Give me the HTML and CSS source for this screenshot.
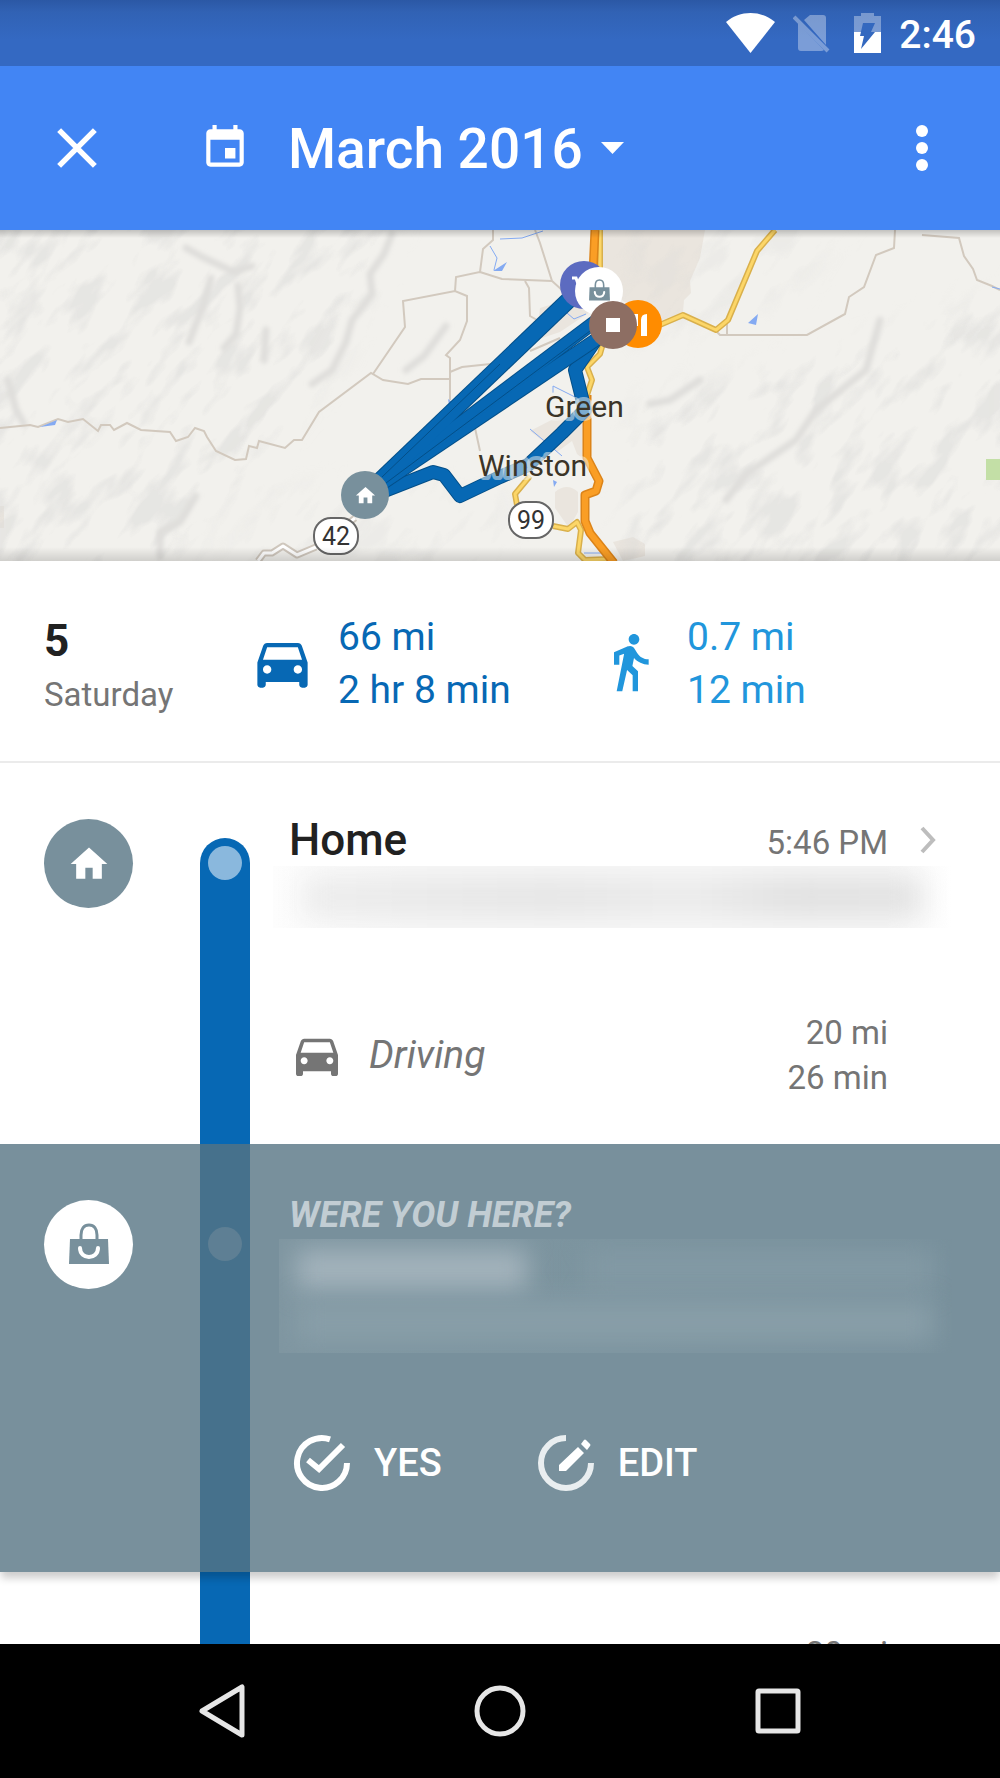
FILE: index.html
```
<!DOCTYPE html>
<html lang="en">
  <head>
    <meta charset="UTF-8" />
    <meta name="viewport" content="width=device-width, initial-scale=1.0"/>
    <title>Timeline</title>
    <link rel="stylesheet" href="styles.css">
  </head>
  <body>
    <!-- shared icons -->
    <svg class="defs" aria-hidden="true">
      <symbol id="car" viewBox="0 0 24 24">
        <path d="M18.92 6.01C18.72 5.42 18.16 5 17.5 5h-11c-.66 0-1.21.42-1.42 1.01L3 12v8c0 .55.45 1 1 1h1c.55 0 1-.45 1-1v-1h12v1c0 .55.45 1 1 1h1c.55 0 1-.45 1-1v-8l-2.08-5.99zM6.5 16c-.83 0-1.5-.67-1.5-1.5S5.67 13 6.5 13s1.5.67 1.5 1.5S7.33 16 6.5 16zm11 0c-.83 0-1.5-.67-1.5-1.5s.67-1.5 1.5-1.5 1.5.67 1.5 1.5-.67 1.5-1.5 1.5zM5 11l1.5-4.5h11L19 11H5z"/>
      </symbol>
      <symbol id="house" viewBox="0 0 24 24">
        <path d="M10 20v-6h4v6h5v-8h3L12 3 2 12h3v8z"/>
      </symbol>
      <symbol id="bag" viewBox="0 0 44 44">
        <path d="M3 16h38l1 25H2z"/>
        <path class="line" d="M14 18v-6c0-6 3-10 8-10s8 4 8 10v6" stroke="currentColor" stroke-width="3"/>
        <path class="line" d="M13 25c0 12 18 12 18 0" stroke="#fff" stroke-width="4" stroke-linecap="round"/>
      </symbol>
    </svg>

    <div class="status-bar">
      <svg width="49" height="40" viewBox="0 0 49 40"><path d="M0 9C14-3 35-3 49 9L24.500 40z"/></svg>
      <svg class="sim" width="37" height="40" viewBox="0 0 37 40"><path d="M11 7l6-5h13q3 0 3 3v27zM5 10l26 27q-1 1-3 1H8q-3 0-3-3z"/><path d="M1 4l34 34" stroke="#fff" stroke-width="4"/></svg>
      <svg class="battery" width="27" height="40" viewBox="0 0 27 40">
        <path d="M7 0h13v3h7v16H0V3h7z" opacity=".35"/>
        <path d="M0 19h27v21H0z"/>
        <path d="M9 10h12l-4 9h4L7 36l3-13H6z" fill="#3368bf"/>
      </svg>
      <span class="clock">2:46</span>
    </div>

    <header class="app-bar">
      <button class="icon-button" aria-label="Close">
        <svg width="66" height="66" viewBox="0 0 24 24"><path d="M5.500 5.500l13 13M18.500 5.500l-13 13" stroke="#fff" stroke-width="2"/></svg>
      </button>
      <button class="month">
        <svg width="50" height="50" viewBox="0 0 24 24"><path d="M17 12h-5v5h5v-5zM16 1v2H8V1H6v2H5c-1.110 0-1.990.9-1.990 2L3 19c0 1.100.890 2 2 2h14c1.100 0 2-.9 2-2V5c0-1.100-.9-2-2-2h-1V1h-2zm3 18H5V8h14v11z"/></svg>
        <span class="month-name">March 2016</span>
        <svg width="23" height="12" viewBox="0 0 23 12"><path d="M0 0h23L11.500 12z"/></svg>
      </button>
      <button class="icon-button more" aria-label="More options">
        <svg width="66" height="66" viewBox="0 0 66 66"><circle cx="32" cy="16" r="6"/><circle cx="32" cy="33" r="6"/><circle cx="32" cy="50" r="6"/></svg>
      </button>
    </header>

    <div class="map">
      <svg class="map-canvas" viewBox="0 0 1000 331" preserveAspectRatio="xMidYMid slice" role="img" aria-label="Map of the day's trips">
        <defs>
          <filter id="relief" x="0" y="0" width="100%" height="100%">
            <feTurbulence type="fractalNoise" baseFrequency="0.018 0.045" numOctaves="3" seed="8"/>
            <feColorMatrix values="0 0 0 0 0.7  0 0 0 0 0.7  0 0 0 0 0.69  5 0 0 0 -2.5"/>
          </filter>
          <filter id="soft"><feGaussianBlur stdDeviation="14"/></filter>
          <filter id="soften"><feGaussianBlur stdDeviation="2"/></filter>
          <mask id="hills">
            <g fill="#fff" filter="url(#soft)">
              <path d="M-20-20H400L370 60 330 140 250 240 170 350H-20z"/>
              <path d="M1020 60L850 120 640 170 620 350H1020z"/>
              <path d="M620-20H850L800 60 640 120z" opacity=".5"/>
              <path d="M260 260H500V350H230z" opacity=".5"/>
            </g>
          </mask>
        </defs>
        <rect width="1000" height="331" fill="#f2f1ed"/>
        <path d="M600 0h105l-5 28-10 23 1 12-7 7-1 12-23 9-37-20-20-30z" fill="#eae5de"/>
        <path d="M530 201l35-18 22-6v55l-10-8-5-13-15 11zM555 262q12-10 23 0v20l-9 16-14-20zM613 312l20-5 12 7v12l-22 5zM540 78l26-8 24 12-30 20-24 8zM0 276h4v22H0z" fill="#eae5de"/>
        <g mask="url(#hills)">
          <g transform="rotate(-50 500 165)"><rect x="-150" y="-400" width="1300" height="1130" filter="url(#relief)" opacity=".48"/></g>
        </g>
        <!-- ridges -->
        <g fill="none" stroke="#dfdedb" stroke-width="7" stroke-linecap="round" filter="url(#soften)">
          <path d="M392 4l-8 20-14 20 2 20-20 26-6 22-14 28-20 14"/>
          <path d="M186 18l18 10 30 14 18-6"/>
          <path d="M211 48l-8 28-14 36"/>
          <path d="M238 56l2 22-4 26-12 14"/>
          <path d="M266 100l-2 30M446 96l-22 30-18 14"/>
          <path d="M196 266l-16 26-20 10v24"/>
          <path d="M8 150l8 30 8 14"/>
          <path d="M700 150l-30 20-20 4M880 90l-14 50-50 40-20 30-50 34-20 26"/>
        </g>
        <path d="M986 229h14v21h-14z" fill="#c3dfa6"/>

        <!-- minor roads -->
        <g fill="none" stroke="#d2c9be" stroke-width="2">
          <path d="M0 198L30 195 38 197 58 189 68 192 83 189 98 201 101 195 110 195 114 200 127 193 141 200 170 202 176 211 188 207 195 198 204 201 207 207 216 221 235 230 246 229 249 216 257 218 259 211 285 218 294 210 302 210 319 182 371 143 383 150 408 154 421 149 450 149"/>
          <path d="M373 144L405 97 403 71 455 61 467 66 467 91 460 110 446 125 450 128 450 170"/>
          <path d="M455 61L456 47 480 42 483 19 493 10V0M480 42L502 49 552 51"/>
          <path d="M535 0L540 13 552 51 562 60M525 51L529 58 530 86 537 90M530 121L560 108M450 142L462 137 500 133M475 198L480 221"/>
          <path d="M716 101L720 105H807L845 84 849 67 864 57 876 25 894 18 895 0M727 90V105"/>
          <path d="M922 5L959 8 964 26 973 39 977 50 992 56 1000 60"/>
        </g>
        <g fill="none" stroke-linejoin="round">
          <path d="M258 331L264 323 272 323 283 316 297 325 316 317M340 300L355 288" stroke="#cfc7bd" stroke-width="7"/>
          <path d="M258 331L264 323 272 323 283 316 297 325 316 317M340 300L355 288" stroke="#fff" stroke-width="3"/>
        </g>
        <!-- water -->
        <path d="M40 197l17-7-2 5zM748 93l10-9-2 11zM493 41l14-9-5 9zM448 169l4 3-3 3zM553 250l4 2-3 5z" fill="#84aaf2"/>
        <path d="M500 9l22-1 21-7M490 16l7 12-3 12M553 163v-7l22 11M530 199l18 15 14 12M567 83l7 6 12-5M584 323h20M992 57l8 2" fill="none" stroke="#84aaf2"/>

        <!-- highways -->
        <g fill="none" stroke-linejoin="round">
          <g stroke="#d9b04c" stroke-width="6">
            <path d="M655 97L683 85 716 100 728 90 757 21 775 0"/>
            <path d="M600 0V60M604 110L600 124 587 137 592 150 587 165"/>
            <path d="M530 246L515 264 517 275M553 296L568 299 577 292 581 300 578 323 585 330 610 329"/>
          </g>
          <g stroke="#fcd668" stroke-width="3">
            <path d="M655 97L683 85 716 100 728 90 757 21 775 0"/>
            <path d="M600 0V60M604 110L600 124 587 137 592 150 587 165"/>
            <path d="M530 246L515 264 517 275M553 296L568 299 577 292 581 300 578 323 585 330 610 329"/>
          </g>
          <path d="M595 0L592 65M587 165V228L599 251 596 261 585 265V291L590 303 614 333" stroke="#dc8419" stroke-width="9"/>
          <path d="M595 0L592 65M587 165V228L599 251 596 261 585 265V291L590 303 614 333" stroke="#fa9e25" stroke-width="6"/>
        </g>

        <!-- trips -->
        <g fill="none" stroke-linejoin="round">
          <path d="M597 108L575 140 585 180 562 203 528 235 500 247 460 266 444 245 433 242 387 260 365 265" stroke="#044f88" stroke-width="14"/>
          <path d="M597 108L575 140 585 180 562 203 528 235 500 247 460 266 444 245 433 242 387 260 365 265" stroke="#0768b4" stroke-width="12"/>
          <g stroke="#044f88" stroke-width="14"><path d="M365 265L603 105"/><path d="M365 265L600 88"/></g>
          <path d="M365 265L575 64" stroke="#044f88" stroke-width="17"/>
          <g stroke="#0768b4" stroke-width="12"><path d="M365 265L603 105"/><path d="M365 265L600 88"/></g>
          <path d="M365 265L575 64" stroke="#0768b4" stroke-width="15"/>
          <path d="M382 247L500 134M386 253L590 101" stroke="#044f88"/>
        </g>

        <!-- places -->
        <g class="map-label">
          <text x="545" y="187">Green</text>
          <text x="478" y="246">Winston</text>
        </g>
        <g class="shield">
          <rect x="509" y="272" width="44" height="36" rx="17"/><text x="531" y="299">99</text>
          <rect x="314" y="288" width="44" height="36" rx="17"/><text x="336" y="315">42</text>
        </g>

        <circle cx="365" cy="265" r="24" fill="#78909c"/>
        <use href="#house" x="354" y="254" width="23" height="23" fill="#fff"/>
        <circle cx="584" cy="55" r="24" fill="#5c6bc0"/>
        <path d="M572 48h4l4 12h9" fill="none" stroke="#fff" stroke-width="3"/>
        <circle cx="638" cy="94" r="24" fill="#ff8c00"/>
        <path d="M634 84v12h4V84zM641 106V90q0-6 6-6v22z" fill="#fff"/>
        <circle cx="599" cy="61" r="24" fill="#fff"/>
        <use href="#bag" class="bag-color" x="588" y="49" width="23" height="23"/>
        <circle cx="613" cy="95" r="24" fill="#8d6e63"/>
        <path d="M606 88h14v14h-14z" fill="#fff"/>
      </svg>
    </div>

    <section class="summary">
      <div class="day">
        <h2>5</h2>
        <p>Saturday</p>
      </div>
      <div class="total drive">
        <svg width="67" height="67"><use href="#car"/></svg>
        <p>66 mi<br>2 hr 8 min</p>
      </div>
      <div class="total walk">
        <svg width="64" height="64" viewBox="0 0 24 24"><path d="M13.500 5.500c1.100 0 2-.9 2-2s-.9-2-2-2-2 .9-2 2 .9 2 2 2zM9.800 8.900L7 23h2.100l1.800-8 2.100 2v6h2v-7.500l-2.100-2 .6-3C14.800 12 16.800 13 19 13v-2c-1.900 0-3.500-1-4.300-2.400l-1-1.600c-.4-.6-1-1-1.700-1-.3 0-.5.1-.8.1L6 8.300V13h2V9.600l1.800-.7"/></svg>
        <p>0.7 mi<br>12 min</p>
      </div>
    </section>

    <main class="timeline">
      <article class="stop">
        <div class="badge"><svg width="44" height="44"><use href="#house"/></svg></div>
        <div class="track track-start"><span class="dot"></span></div>
        <div class="details">
          <div class="place">
            <h3>Home</h3>
            <time>5:46 PM</time>
            <svg width="16" height="28" viewBox="0 0 16 28"><path class="line" d="M2 2l11 12L2 26" stroke="#bdbdbd" stroke-width="4"/></svg>
          </div>
          <div class="hidden-address"><span class="smudge"></span></div>
          <div class="leg">
            <svg width="56" height="56"><use href="#car"/></svg>
            <em>Driving</em>
            <p>20 mi<br>26 min</p>
          </div>
        </div>
      </article>

      <article class="stop confirm">
        <div class="badge"><svg width="44" height="44"><use href="#bag"/></svg></div>
        <div class="track"><span class="dot"></span></div>
        <div class="details">
          <h3>WERE YOU HERE?</h3>
          <div class="hidden-place"><span class="smudge name"></span><span class="smudge"></span><span class="smudge wide"></span></div>
          <div class="actions">
            <button>
              <svg width="60" height="60" viewBox="0 0 60 60"><path class="line" d="M38 6.300A25 25 0 1 0 55 30M16 27l11 9 24-24" stroke="#fff" stroke-width="6"/></svg>
              YES
            </button>
            <button>
              <svg width="60" height="60" viewBox="0 0 60 60"><path class="line" d="M30 5A25 25 0 1 0 55 30" stroke="#e9eef0" stroke-width="6"/><path d="M23 38v-6l19-18 6 6-18 18zM45 11l3-4q1-1 2 0l4 4q1 1 0 2l-3 4z"/></svg>
              EDIT
            </button>
          </div>
        </div>
      </article>

      <article class="stop next">
        <div></div>
        <div class="track"></div>
        <div class="details">
          <div class="leg"><p>20 mi</p></div>
        </div>
      </article>
    </main>

    <nav class="nav-bar">
      <button aria-label="Back"><svg width="56" height="56" viewBox="0 0 56 56"><path class="line" d="M48 4v48L8 28z"/></svg></button>
      <button aria-label="Home screen"><svg width="56" height="56" viewBox="0 0 56 56"><circle class="line" cx="28" cy="28" r="23"/></svg></button>
      <button aria-label="Recent apps"><svg width="56" height="56" viewBox="0 0 56 56"><rect class="line" x="8" y="8" width="40" height="40" rx="1"/></svg></button>
    </nav>
  </body>
</html>
```
FILE: styles.css
```
* {
  box-sizing: border-box;
}

body {
  font-family: Roboto, "Liberation Sans", sans-serif;
  margin: 0;
  height: 100vh;
  display: flex;
  flex-direction: column;
  background-color: #fff;
  color: #212121;
}

h2, h3, p { margin: 0; }

svg {
  display: block;
  flex-shrink: 0;
  fill: currentColor;
}
.line { fill: none; }

button {
  background: none;
  border: 0;
  padding: 0;
  color: inherit;
  font-family: inherit;
}

.defs {
  position: absolute;
  width: 0;
  height: 0;
}

/* Status bar */
.status-bar {
  flex: none;
  height: 66px;
  padding-right: 24px;
  display: flex;
  align-items: center;
  justify-content: flex-end;
  gap: 18px;
  background: linear-gradient(#2b58a5, #3162b4 12px, #3469c2 40px);
  color: white;
}
.sim { opacity: 0.35; }
.battery { margin-left: 6px; }
.clock {
  padding-top: 3px;
  font-size: 39px;
  font-weight: 500;
}

/* App bar */
.app-bar {
  flex: none;
  height: 164px;
  padding: 0 44px;
  display: flex;
  align-items: center;
  background-color: #4285f4;
  color: white;
}
.month {
  display: flex;
  align-items: center;
  gap: 18px;
  margin-left: 90px;
}
.month-name {
  padding: 2px 0 0 20px;
  font-size: 55px;
  font-weight: 500;
}
.more { margin-left: auto; }

/* Map */
.map {
  flex: none;
  position: relative;
}
.map-canvas {
  width: 100%;
  height: 331px;
}
.map::after {
  content: "";
  position: absolute;
  inset: 0;
  background: linear-gradient(rgba(0,0,0,0.2), rgba(0,0,0,0) 8px, rgba(0,0,0,0) 317px, rgba(0,0,0,0.14));
}
.map-label {
  font-size: 30px;
  fill: #3b3427;
  stroke: rgba(242,241,237,0.5);
  stroke-width: 8px;
  stroke-linejoin: round;
  paint-order: stroke;
}
.shield rect {
  fill: white;
  stroke: #666;
  stroke-width: 2px;
}
.shield text {
  font-size: 25px;
  fill: #333;
  text-anchor: middle;
}
.bag-color { color: #78909c; fill: #78909c; }

/* Totals for the day */
.summary {
  flex: none;
  display: grid;
  grid-template-columns: 205px 349px 1fr;
  align-items: start;
  padding: 50px 44px 40px;
  border-bottom: 2px solid #ebebeb;
}
.day { padding-top: 4px; }
.day h2 {
  font-size: 44px;
  line-height: 53px;
  font-weight: 700;
}
.day p {
  font-size: 33px;
  line-height: 53px;
  color: #757575;
}
.total {
  display: flex;
  align-items: center;
  gap: 22px;
  font-size: 39px;
  line-height: 53px;
}
.total svg { margin-bottom: 4px; }
.drive { color: #0768b4; }
.walk {
  gap: 25px;
  color: #2196dc;
}

/* Timeline */
.timeline {
  flex: 1;
  min-height: 0;
  overflow: hidden;
}
.stop {
  display: grid;
  grid-template-columns: 200px 50px 1fr;
}
.badge {
  width: 89px;
  height: 89px;
  margin: 56px 0 0 44px;
  display: flex;
  align-items: center;
  justify-content: center;
  border-radius: 50%;
  background-color: #78909c;
  color: white;
}
.track {
  padding: 83px 8px 0;
  background-color: #0768b4;
}
.track-start {
  margin-top: 75px;
  padding-top: 8px;
  border-radius: 25px 25px 0 0;
}
.dot {
  display: block;
  height: 34px;
  border-radius: 50%;
  background-color: #8ab8dd;
}
.details {
  padding: 51px 64px 44px 39px;
}
.place {
  display: flex;
  align-items: center;
}
.place h3 {
  flex: 1;
  font-size: 44px;
  line-height: 52px;
  font-weight: 500;
}
.place time {
  margin-right: 32px;
  padding-top: 4px;
  font-size: 33px;
  color: #757575;
}
.leg {
  display: flex;
  align-items: center;
  padding-right: 48px;
  color: #757575;
}
.leg em {
  margin-left: 24px;
  font-size: 39px;
}
.leg p {
  margin-left: auto;
  font-size: 33px;
  line-height: 45px;
  text-align: right;
}

/* Blurred private details */
.hidden-address {
  height: 62px;
  margin: 0 -16px 82px;
  padding: 10px 30px;
  overflow: hidden;
  background: linear-gradient(90deg, #fdfdfd, #f8f8f8 20%, #f8f8f8 90%, #fff);
}
.smudge {
  display: block;
  height: 42px;
  background: linear-gradient(90deg, #ececec, #e5e5e5 40%, #ebebeb 62%, #e0e0e0 80%, #e3e3e3);
  filter: blur(14px);
}

/* Unconfirmed place */
.confirm {
  position: relative;
  background-color: #78909c;
  box-shadow: 0 7px 8px -1px rgba(0,0,0,0.2);
  color: white;
}
.confirm .badge {
  background-color: white;
  color: #78909c;
}
.confirm .track { background-color: #46718c; }
.confirm .dot { background-color: #5e7f94; }
.confirm .details { padding: 47px 64px 79px 39px; }
.confirm h3 {
  font-size: 36px;
  line-height: 48px;
  font-weight: 700;
  font-style: italic;
  color: #c2cdd3;
}
.hidden-place {
  height: 114px;
  margin: 0 -16px 80px -10px;
  padding: 10px 18px;
  display: grid;
  grid-template-columns: 230px 1fr;
  gap: 10px 60px;
  overflow: hidden;
  background: linear-gradient(90deg, #7f96a1, #7c949f 50%, #78909c);
}
.hidden-place .smudge {
  background: #8299a4;
  filter: blur(12px);
}
.hidden-place .name { background: #a2b2bb; }
.hidden-place .wide {
  grid-column: span 2;
  background: #889ea8;
}
.actions {
  display: flex;
  gap: 94px;
  margin-left: 3px;
}
.actions button {
  display: flex;
  align-items: center;
  gap: 22px;
  font-size: 38px;
  font-weight: 500;
}

.next .details { padding-top: 59px; }

/* System navigation */
.nav-bar {
  flex: none;
  height: 134px;
  padding: 0 83px;
  display: flex;
  align-items: center;
  justify-content: space-around;
  background-color: black;
}
.nav-bar svg {
  stroke: #e6e6e6;
  stroke-width: 5px;
  stroke-linejoin: round;
}
```
